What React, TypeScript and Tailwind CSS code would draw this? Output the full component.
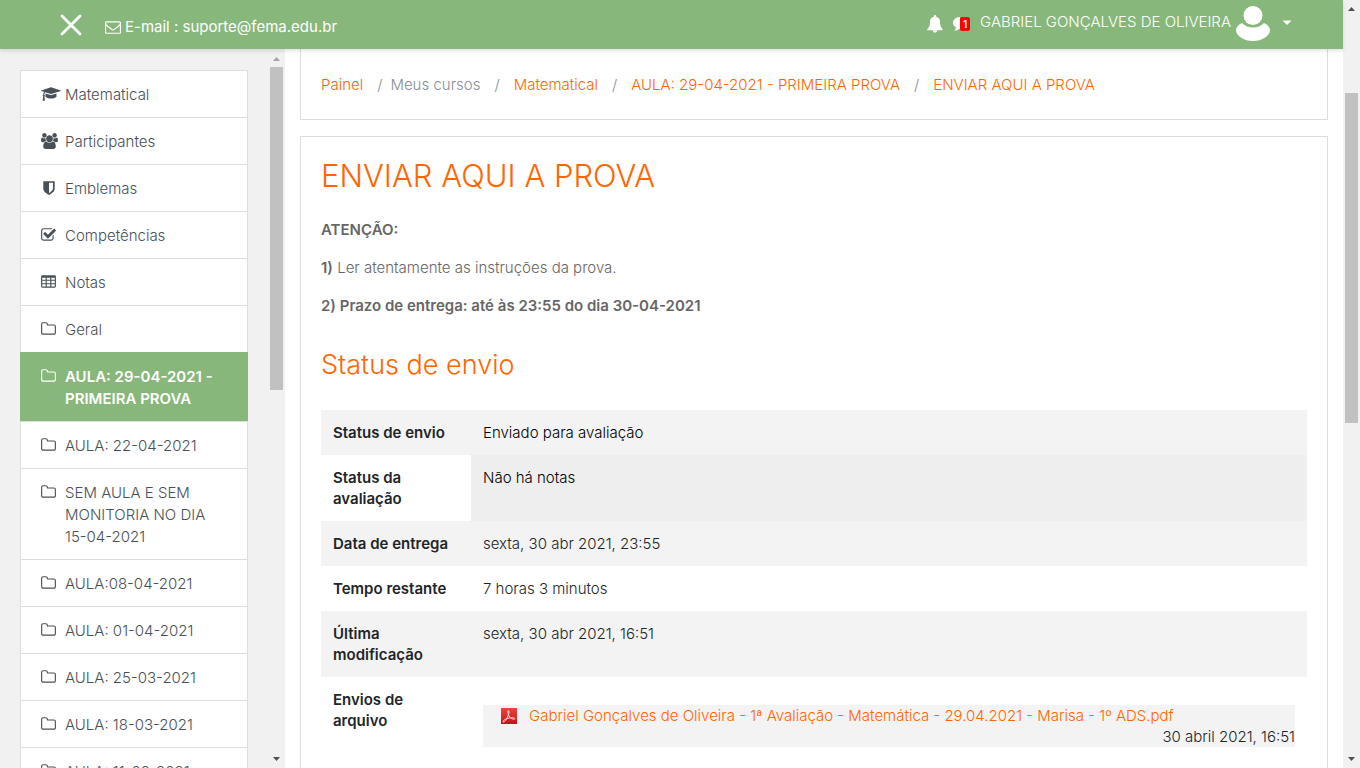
import type { ReactNode } from "react";

const paths = {
  mail: "M1664 1504v-768q-32 36-69 66-268 206-426 338-51 43-83 67t-86.500 48.500-102.500 24.500h-2q-48 0-102.500-24.500t-86.500-48.500-83-67q-158-132-426-338-37-30-69-66v768q0 13 9.500 22.500t22.500 9.500h1472q13 0 22.500-9.500t9.500-22.500zm0-1051v-24.500l-.5-13-3-12.500-5.500-9-9-7.500-14-2.500h-1472q-13 0-22.500 9.500t-9.500 22.500q0 168 147 284 193 152 401 317 6 5 35 29.500t46 37.500 44.500 31.500 50.500 27.500 43 9h2q20 0 43-9t50.500-27.500 44.500-31.500 46-37.500 35-29.500q208-165 401-317 54-43 100.500-115.500t46.500-131.500zm128-37v1088q0 66-47 113t-113 47h-1472q-66 0-113-47t-47-113v-1088q0-66 47-113t113-47h1472q66 0 113 47t47 113z",
  folder: "M1536 1312v-704q0-40-28-68t-68-28h-704q-40 0-68-28t-28-68v-64q0-40-28-68t-68-28h-320q-40 0-68 28t-28 68v960q0 40 28 68t68 28h1216q40 0 68-28t28-68zm128-704v704q0 92-66 158t-158 66h-1216q-92 0-158-66t-66-158v-960q0-92 66-158t158-66h320q92 0 158 66t66 158v32h672q92 0 158 66t66 158z",
  check: "M1408 930v318q0 119-84.500 203.500t-203.500 84.500h-832q-119 0-203.500-84.500t-84.500-203.500v-832q0-119 84.500-203.500t203.500-84.500h832q63 0 117 25 15 7 18 23 3 17-9 29l-49 49q-10 10-23 10-3 0-9-2-23-6-45-6h-832q-66 0-113 47t-47 113v832q0 66 47 113t113 47h832q66 0 113-47t47-113v-254q0-13 9-22l64-64q10-10 23-10 6 0 12 3 20 8 20 29zm231-489l-814 814q-24 24-57 24t-57-24l-430-430q-24-24-24-57t24-57l110-110q24-24 57-24t57 24l263 263 647-647q24-24 57-24t57 24l110 110q24 24 24 57t-24 57z",
  cap: "M1774 836l18 316q4 69-82 128t-235 93.500-323 34.500-323-34.500-235-93.500-82-128l18-316 574 181q22 7 48 7t48-7zm530-324q0 23-22 31l-1120 352q-4 1-10 1t-10-1l-652-206q-43 34-71 111.500t-34 178.500q63 36 63 109 0 69-58 107l58 433q2 14-8 25-9 11-24 11h-192q-15 0-24-11-10-11-8-25l58-433q-58-38-58-107 0-73 65-111 11-207 98-330l-333-104q-22-8-22-31t22-31l1120-352q4-1 10-1t10 1l1120 352q22 8 22 31z",
  users: "M593 896q-162 5-265 128h-134q-82 0-138-40.500t-56-118.500q0-353 124-353 6 0 43.500 21t97.500 42.500 119 21.500q67 0 133-23-5 37-5 66 0 139 81 256zm1071 637q0 120-73 189.500t-194 69.500h-874q-121 0-194-69.500t-73-189.500q0-53 3.500-103.500t14-109 26.500-108.500 43-97.500 62-81 85.500-53.500 111.500-20q10 0 43 21.500t73 48 107 48 135 21.500 135-21.500 107-48 73-48 43-21.500q61 0 111.500 20t85.500 53.500 62 81 43 97.500 26.500 108.500 14 109 3.500 103.500zm-1024-1277q0 106-75 181t-181 75-181-75-75-181 75-181 181-75 181 75 75 181zm704 384q0 159-112.500 271.500t-271.500 112.500-271.500-112.500-112.500-271.500 112.500-271.500 271.500-112.500 271.500 112.500 112.500 271.500zm576 225q0 78-56 118.500t-138 40.500h-134q-103-123-265-128 81-117 81-256 0-29-5-66 66 23 133 23 59 0 119-21.500t97.500-42.500 43.500-21q124 0 124 353zm-128-609q0 106-75 181t-181 75-181-75-75-181 75-181 181-75 181 75 75 181z",
  shield: "M1344 960v-640h-448v1137q119-63 213-137 235-184 235-360zm192-768v768q0 86-33.500 170.500t-83 150-118 127.500-126.500 103-121 77.500-89.500 49.500-42.500 20q-12 6-26 6t-26-6q-16-7-42.500-20t-89.500-49.500-121-77.500-126.500-103-118-127.500-83-150-33.500-170.500v-768q0-26 19-45t45-19h1152q26 0 45 19t19 45z",
  table: "M160 128h1344q66 0 113 47t47 113v1088q0 66-47 113t-113 47h-1344q-66 0-113-47t-47-113v-1088q0-66 47-113t113-47zM128 416v224h384v-224zM640 416v224h384v-224zM1152 416v224h384v-224zM128 768v256h384v-256zM640 768v256h384v-256zM1152 768v256h384v-256zM128 1152v224q0 32 32 32h352v-256zM640 1152v256h384v-256zM1152 1152v256h352q32 0 32-32v-224z",
};

function Glyph({ d, width, className }: { d: string; width: number; className: string }) {
  return (
    <svg viewBox={`0 0 ${width} 1792`} className={className} fill="currentColor" fillRule={d === paths.table ? "evenodd" : "nonzero"} aria-hidden="true">
      <path d={d} />
    </svg>
  );
}

const folder = <Glyph d={paths.folder} width={1664} className="h-4 w-[15px]" />;

const items: { label: string; icon: ReactNode; active?: boolean }[] = [
  { label: "Matematical", icon: <Glyph d={paths.cap} width={2304} className="h-4 w-5" /> },
  { label: "Participantes", icon: <Glyph d={paths.users} width={1920} className="h-4 w-[17px]" /> },
  { label: "Emblemas", icon: <Glyph d={paths.shield} width={1792} className="h-4 w-4" /> },
  { label: "Competências", icon: <Glyph d={paths.check} width={1664} className="h-4 w-[15px]" /> },
  { label: "Notas", icon: <Glyph d={paths.table} width={1664} className="h-4 w-[15px]" /> },
  { label: "Geral", icon: folder },
  { label: "AULA: 29-04-2021 - PRIMEIRA PROVA", icon: folder, active: true },
  { label: "AULA: 22-04-2021", icon: folder },
  { label: "SEM AULA E SEM MONITORIA NO DIA 15-04-2021", icon: folder },
  { label: "AULA:08-04-2021", icon: folder },
  { label: "AULA: 01-04-2021", icon: folder },
  { label: "AULA: 25-03-2021", icon: folder },
  { label: "AULA: 18-03-2021", icon: folder },
  { label: "AULA: 11-03-2021", icon: folder },
];

const crumbs = [
  { label: "Painel", link: true },
  { label: "Meus cursos", link: false },
  { label: "Matematical", link: true },
  { label: "AULA: 29-04-2021 - PRIMEIRA PROVA", link: true },
  { label: "ENVIAR AQUI A PROVA", link: true },
];

const rows = [
  { head: "Status de envio", value: "Enviado para avaliação", row: "bg-[#f3f3f3]", cell: "text-black" },
  { head: "Status da avaliação", value: "Não há notas", row: "", cell: "bg-[#eeeeee] text-black" },
  { head: "Data de entrega", value: "sexta, 30 abr 2021, 23:55", row: "bg-[#f3f3f3]", cell: "" },
  { head: "Tempo restante", value: "7 horas 3 minutos", row: "", cell: "" },
  { head: "Última modificação", value: "sexta, 30 abr 2021, 16:51", row: "bg-[#f3f3f3]", cell: "" },
];

function Arrow({ down = false, light = false }: { down?: boolean; light?: boolean }) {
  return (
    <svg viewBox="0 0 7 4" className={light ? "h-1 w-[7px] text-[#a3a3a3]" : "h-1 w-[7px] text-[#505050]"} fill="currentColor" aria-hidden="true">
      <path d={down ? "M0 0h7L3.500 4z" : "M0 4h7L3.500 0z"} />
    </svg>
  );
}

function Header() {
  return (
    <header className="relative z-10 flex h-[49px] shrink-0 items-center bg-[#88b77b] pr-[51px] pl-[60px] text-white shadow-[0_2px_4px_rgba(0,0,0,0.12)]">
      <button type="button" aria-label="Fechar menu">
        <svg viewBox="0 0 22 22" className="size-[22px]" fill="none" stroke="currentColor" strokeWidth="2.800" strokeLinecap="round" aria-hidden="true">
          <path d="M2 2l18 18M20 2L2 20" />
        </svg>
      </button>
      <a href="mailto:suporte@fema.edu.br" className="ml-[23px] flex items-center gap-1 pt-[5px] font-normal">
        <Glyph d={paths.mail} width={1792} className="size-4" />
        E-mail : suporte@fema.edu.br
      </a>
      <div className="ml-auto flex items-center pb-px">
        <button type="button" aria-label="Notificações">
          <svg viewBox="0 0 16 18" className="h-[18px] w-4" fill="currentColor" aria-hidden="true">
            <path d="M8 0c.7 0 1.200.5 1.200 1.200v.5C11.700 2.200 13 4.200 13 6.800c0 3.500.8 5.700 2.700 7.300v1.200H.3v-1.200C2.200 12.500 3 10.300 3 6.800c0-2.600 1.300-4.600 3.800-5.100v-.5C6.800.5 7.300 0 8 0zM5.800 15.500h4.400C10.200 16.700 9.300 17.600 8 17.600s-2.200-.9-2.200-2.100z" />
          </svg>
        </button>
        <button type="button" aria-label="Mensagens" className="ml-[10px] flex items-start">
          <svg viewBox="0 0 7 16" className="h-4 w-[7px]" fill="currentColor" aria-hidden="true">
            <path d="M7 1C3 1.200 0 3.700 0 6.700c0 2 1.200 3.700 3 4.700-.2 1.300-.8 2.400-1.700 3.300C3.700 14.500 5.500 13.700 7 12.300z" />
          </svg>
          <span className="mt-px h-[14px] w-[10px] rounded-[2px] bg-[#ff0000] text-center text-[10px] leading-[14px] font-semibold">1</span>
        </button>
        <button type="button" className="ml-[10px] flex items-center">
          <span className="pb-[3px]">GABRIEL GONÇALVES DE OLIVEIRA</span>
          <svg viewBox="0 0 34 36" className="ml-[5px] h-9 w-[34px]" fill="currentColor" aria-hidden="true">
            <circle cx="17" cy="9.500" r="9.500" />
            <path d="M6 17c3 3 7 4.500 11 4.500S25 20 28 17c4 2 6 4.500 6 7C34 30 26 35 17 35S0 30 0 24c0-2.500 2-5 6-7z" />
          </svg>
          <svg viewBox="0 0 10 5" className="mb-1 ml-3 h-[5px] w-[10px]" fill="currentColor" aria-hidden="true">
            <path d="M.5.500h9L5 5z" />
          </svg>
        </button>
      </div>
    </header>
  );
}

function Sidebar() {
  return (
    <aside className="flex w-[285px] shrink-0 bg-[#f1f1f1]">
      <nav className="min-w-0 flex-1 overflow-hidden pt-[21px] pr-[20px] pl-5">
        <ul className="border border-[#dddddd] bg-white leading-[22px] text-[#495057]">
          {items.map((item) => (
            <li key={item.label} className={item.active ? "-mx-px -mt-px border-b border-[#dddddd] bg-[#88b77b] px-px pt-px font-semibold text-white" : "border-b border-[#dddddd]"}>
              <a href="#" className="flex px-5 pt-[13px] pb-[11px]">
                <span className="flex h-5 w-6 shrink-0 items-center">{item.icon}</span>
                <span className="min-w-0">{item.label}</span>
              </a>
            </li>
          ))}
        </ul>
      </nav>
      <div className="flex w-[17px] flex-col items-center justify-between bg-[#f1f1f1] pt-2 pr-px pb-[7px]">
        <Arrow light />
        <div className="mt-[6px] mb-auto h-[323px] w-[13px] bg-[#c1c1c1]" />
        <Arrow down />
      </div>
    </aside>
  );
}

function PdfIcon() {
  return (
    <svg viewBox="0 0 16 16" className="size-4 shrink-0" aria-hidden="true">
      <defs>
        <linearGradient id="pdf" x1="0" y1="0" x2="0" y2="1">
          <stop offset="0" stopColor="#f0443c" />
          <stop offset="1" stopColor="#c4121c" />
        </linearGradient>
      </defs>
      <rect width="16" height="16" fill="url(#pdf)" />
      <path d="M7.300 2.500c1.200 0 .7 3-.2 5.400C6 10.800 3.700 14.500 2.200 14c-1.200-.5 1.300-2.800 4.600-3.700 3.200-.9 7-1 7 .3 0 1.500-3.500.4-5.300-1.900C6.900 6.600 6.400 2.500 7.300 2.500z" fill="none" stroke="#ffd9d9" strokeWidth="1" />
    </svg>
  );
}

function Submission() {
  return (
    <main className="min-w-0 flex-1 px-[15px]">
      <nav aria-label="Trilha" className="border-x border-b border-[#dddddd] px-5 pt-[25px] pb-[23px] leading-[22px]">
        <ol className="flex flex-wrap">
          {crumbs.map((crumb, i) => (
            <li key={crumb.label} className="flex text-[#868e96]">
              {i > 0 && <span className={crumb.link ? "px-[14px]" : "pr-2 pl-[14px]"}>/</span>}
              {crumb.link ? <a href="#" className="text-[#ff6600]">{crumb.label}</a> : <span>{crumb.label}</span>}
            </li>
          ))}
        </ol>
      </nav>
      <section className="mt-4 border border-[#dddddd] p-5">
        <h1 className="text-[31px] leading-[38px] text-[#ff6600]">ENVIAR AQUI A PROVA</h1>
        <div className="mt-6 flex flex-col gap-4 leading-[22px] text-[#666666]">
          <p className="font-semibold">ATENÇÃO:</p>
          <p><b className="font-semibold">1)</b> Ler atentamente as instruções da prova.</p>
          <p className="font-semibold">2) Prazo de entrega: até às 23:55 do dia 30-04-2021</p>
        </div>
        <h2 className="mt-[31px] text-[27px] leading-[34px] text-[#ff6600]">Status de envio</h2>
        <table className="mt-7 w-full table-fixed leading-[21px] text-[#212529]">
          <tbody>
            {rows.map((row) => (
              <tr key={row.head} className={row.row}>
                <th scope="row" className="w-[150px] p-3 text-left align-top font-semibold">{row.head}</th>
                <td className={`p-3 align-top ${row.cell}`}>{row.value}</td>
              </tr>
            ))}
            <tr>
              <th scope="row" className="w-[150px] p-3 text-left align-top font-semibold">Envios de arquivo</th>
              <td className="px-3 pt-7 pb-3 align-top">
                <div className="bg-[#f3f3f3]">
                  <div className="flex items-center gap-3 pl-[18px]">
                    <PdfIcon />
                    <a href="#" className="text-[#ff6600]">Gabriel Gonçalves de Oliveira - 1ª Avaliação - Matemática - 29.04.2021 - Marisa - 1º ADS.pdf</a>
                  </div>
                  <p className="text-right">30 abril 2021, 16:51</p>
                </div>
              </td>
            </tr>
          </tbody>
        </table>
      </section>
    </main>
  );
}

export default function App() {
  return (
    <div className="flex h-screen overflow-hidden bg-white font-['Inter',sans-serif] text-[15px] font-light">
      <div className="flex min-w-0 flex-1 flex-col">
        <Header />
        <div className="flex min-h-0 flex-1">
          <Sidebar />
          <Submission />
        </div>
      </div>
      <div className="flex w-[17px] shrink-0 flex-col items-center bg-[#f1f1f1] pt-[7px] pb-[7px]">
        <Arrow />
        <div className="mt-[82px] mb-auto h-[330px] w-[13px] bg-[#c1c1c1]" />
        <Arrow down />
      </div>
    </div>
  );
}
